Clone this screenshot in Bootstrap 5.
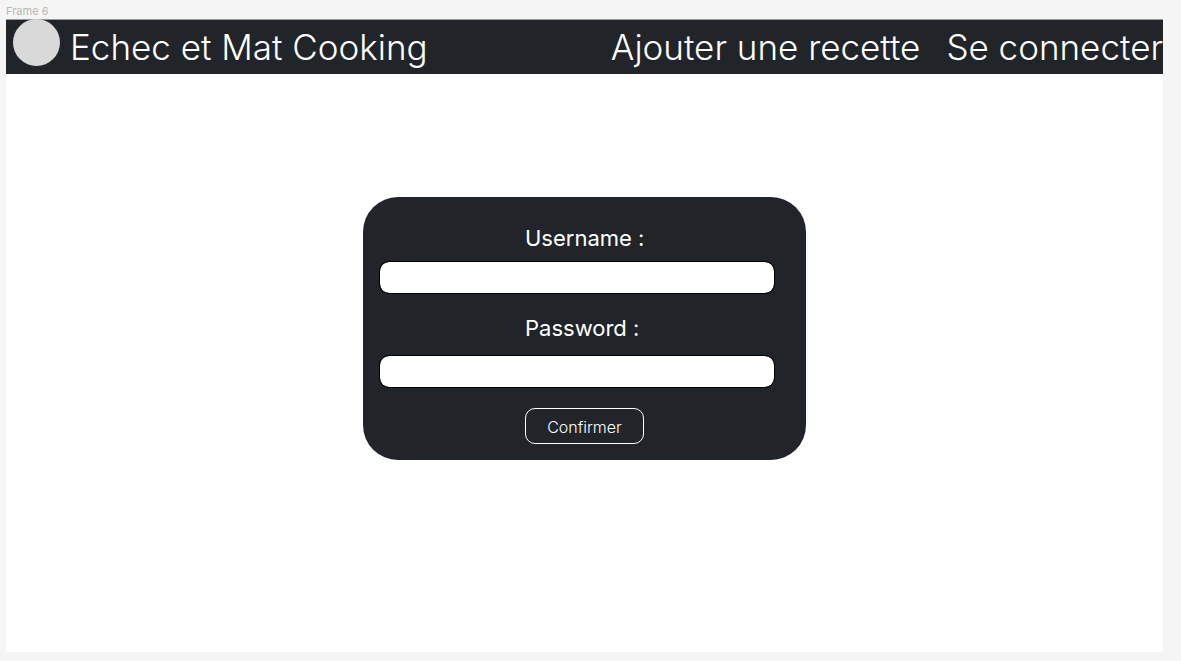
<!DOCTYPE html>
<html lang="fr">
<head>
<meta charset="utf-8">
<meta name="viewport" content="width=device-width, initial-scale=1">
<title>Echec et Mat Cooking</title>
<link rel="stylesheet" href="https://cdn.jsdelivr.net/npm/bootstrap@5.3.0/dist/css/bootstrap.min.css">
<style>
body { background: #f5f5f5; font-family: Inter, "Liberation Sans", sans-serif; }
.canvas { padding: 3px 18px 9px 6px; }
.frame-label { font-size: 11px; line-height: 16px; color: #b8b8b8; }
.site-bar { background: #212529; box-shadow: inset 0 1px #94999a; height: 55px; font-size: 35px; font-weight: 330; line-height: 56px; padding-left: 7px; }
.site-bar a { color: #fff; text-decoration: none; white-space: nowrap; }
.logo-dot { width: 47px; height: 47px; background: #d9d9d9; }
.brand { gap: 10px; }
.site-links { gap: 26px; }
.login-area { padding: 123px 0 0; }
.login-panel { width: 443px; background: #212529; border-radius: 35px; color: #fff; padding: 26px 31px 16px 16px; }
.login-panel label { font-size: 22px; line-height: 30px; margin: 0 0 8px 146px; }
.login-panel .password-label { margin: 19px 0 12px 146px; }
.login-panel .form-control { height: 33px; border: 1px solid #000; border-radius: 10px; }
.confirm-btn { width: 119px; height: 36px; font-size: 16px; font-weight: 350; line-height: 24px; border: 1px solid #fff; border-radius: 10px; color: #fff; padding: 2px 0 0; margin: 20px 0 0 146px; }
</style>
</head>
<body>
<div class="canvas d-flex flex-column min-vh-100">
  <div class="frame-label">Frame 6</div>
  <div class="bg-white flex-grow-1">
    <nav class="site-bar d-flex justify-content-between">
      <a href="#" class="brand d-flex"><span class="logo-dot rounded-circle"></span><span>Echec et Mat Cooking</span></a>
      <div class="site-links d-flex"><a href="#">Ajouter une recette</a><a href="#">Se connecter</a></div>
    </nav>
    <main class="login-area d-flex justify-content-center">
      <form class="login-panel">
        <label for="username" class="d-block">Username :</label>
        <input id="username" type="text" class="form-control">
        <label for="password" class="d-block password-label">Password :</label>
        <input id="password" type="password" class="form-control">
        <button type="button" class="btn d-block confirm-btn">Confirmer</button>
      </form>
    </main>
  </div>
</div>
<script src="https://cdn.jsdelivr.net/npm/bootstrap@5.3.0/dist/js/bootstrap.bundle.min.js"></script>
</body>
</html>
